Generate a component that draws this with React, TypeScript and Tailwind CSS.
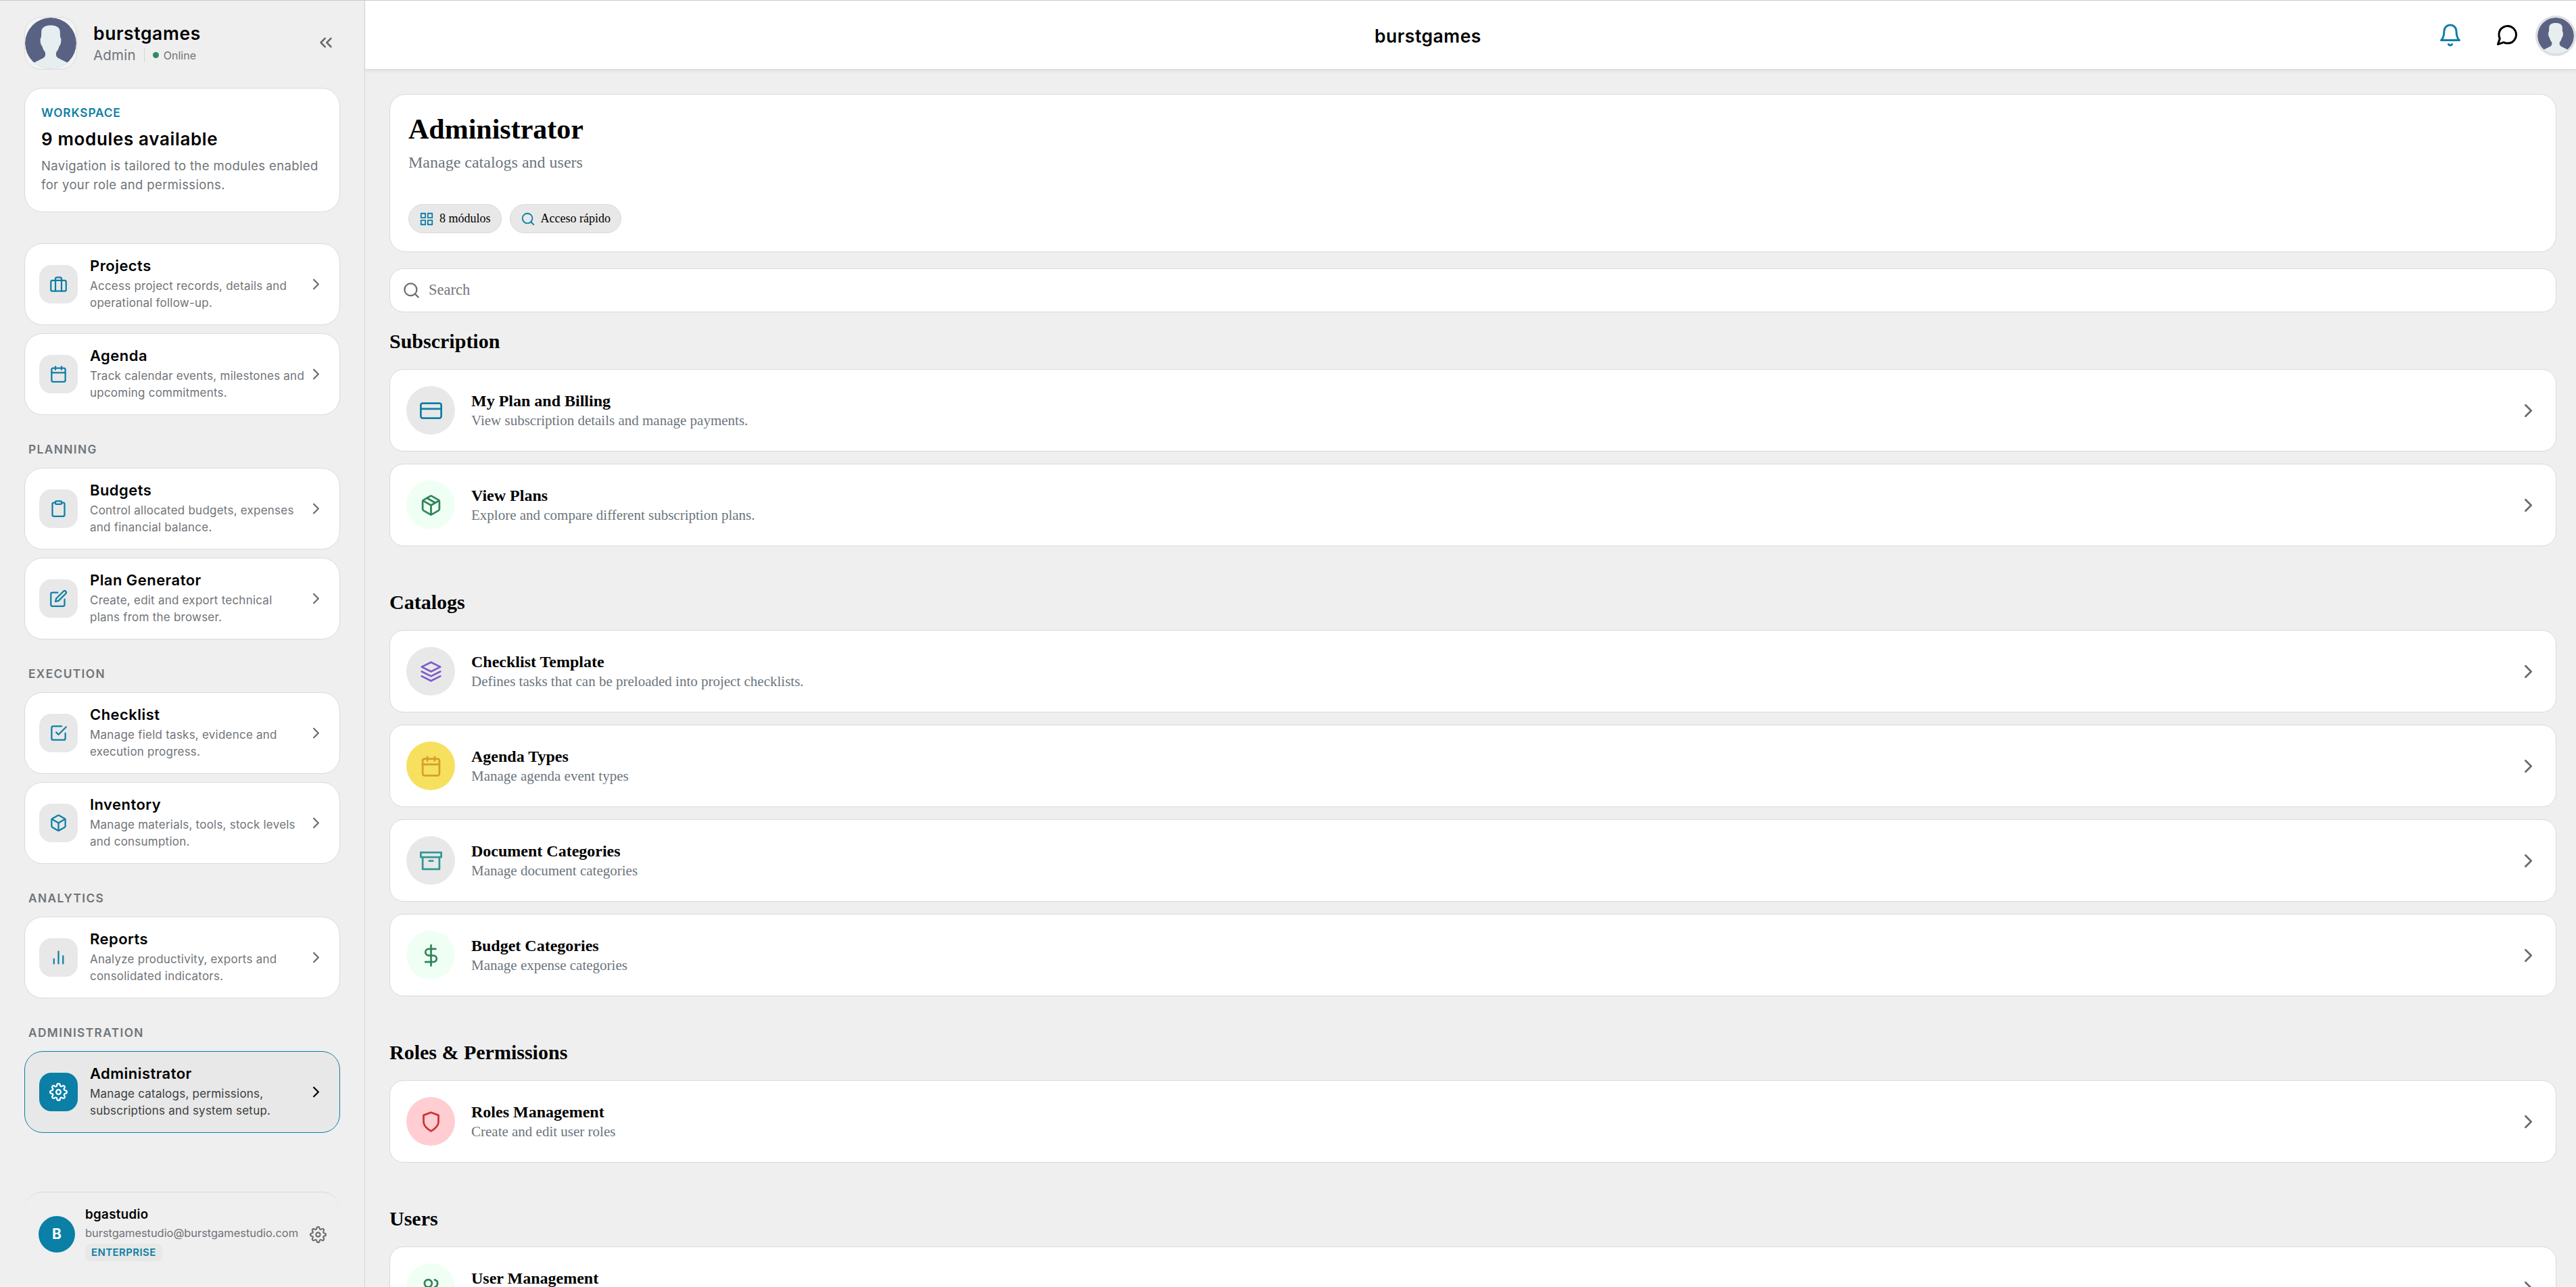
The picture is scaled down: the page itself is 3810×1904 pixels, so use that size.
import type { IconType } from "react-icons";
import {
  FiArchive,
  FiBarChart2,
  FiBell,
  FiBox,
  FiBriefcase,
  FiCalendar,
  FiCheckSquare,
  FiChevronRight,
  FiChevronsLeft,
  FiClipboard,
  FiCreditCard,
  FiDollarSign,
  FiEdit,
  FiGrid,
  FiLayers,
  FiMessageCircle,
  FiSearch,
  FiSettings,
  FiShield,
  FiUsers,
} from "react-icons/fi";

interface NavItem {
  title: string;
  lines: [string, string];
  icon: IconType;
  active?: boolean;
}

interface NavGroup {
  label?: string;
  items: NavItem[];
}

const navGroups: NavGroup[] = [
  {
    items: [
      {
        title: "Projects",
        lines: ["Access project records, details and", "operational follow-up."],
        icon: FiBriefcase,
      },
      {
        title: "Agenda",
        lines: ["Track calendar events, milestones and", "upcoming commitments."],
        icon: FiCalendar,
      },
    ],
  },
  {
    label: "PLANNING",
    items: [
      {
        title: "Budgets",
        lines: ["Control allocated budgets, expenses", "and financial balance."],
        icon: FiClipboard,
      },
      {
        title: "Plan Generator",
        lines: ["Create, edit and export technical", "plans from the browser."],
        icon: FiEdit,
      },
    ],
  },
  {
    label: "EXECUTION",
    items: [
      {
        title: "Checklist",
        lines: ["Manage field tasks, evidence and", "execution progress."],
        icon: FiCheckSquare,
      },
      {
        title: "Inventory",
        lines: ["Manage materials, tools, stock levels", "and consumption."],
        icon: FiBox,
      },
    ],
  },
  {
    label: "ANALYTICS",
    items: [
      {
        title: "Reports",
        lines: ["Analyze productivity, exports and", "consolidated indicators."],
        icon: FiBarChart2,
      },
    ],
  },
  {
    label: "ADMINISTRATION",
    items: [
      {
        title: "Administrator",
        lines: ["Manage catalogs, permissions,", "subscriptions and system setup."],
        icon: FiSettings,
        active: true,
      },
    ],
  },
];

/* Package box with a full tape strip across the lid */
function PackageIcon({ size = 24 }: { size?: number }) {
  return (
    <svg
      width={size}
      height={size}
      viewBox="0 0 24 24"
      fill="none"
      stroke="currentColor"
      strokeWidth="2"
      strokeLinecap="round"
      strokeLinejoin="round"
    >
      <path d="M21 16V8a2 2 0 0 0-1-1.73l-7-4a2 2 0 0 0-2 0l-7 4A2 2 0 0 0 3 8v8a2 2 0 0 0 1 1.73l7 4a2 2 0 0 0 2 0l7-4A2 2 0 0 0 21 16z" />
      <path d="M3.27 6.96 12 12.01l8.73-5.05M12 22.08V12" />
      <path d="M16.4 9.3 7.6 4.2" />
    </svg>
  );
}

const sections = [
  {
    title: "Subscription",
    items: [
      {
        title: "My Plan and Billing",
        desc: "View subscription details and manage payments.",
        icon: FiCreditCard,
        tone: "bg-[#e8e8e8] text-[#0e7fa5]",
      },
      {
        title: "View Plans",
        desc: "Explore and compare different subscription plans.",
        icon: PackageIcon,
        tone: "bg-[#effff4] text-[#2f855a]",
      },
    ],
  },
  {
    title: "Catalogs",
    items: [
      {
        title: "Checklist Template",
        desc: "Defines tasks that can be preloaded into project checklists.",
        icon: FiLayers,
        tone: "bg-[#e8e8e8] text-[#7c5cc9]",
      },
      {
        title: "Agenda Types",
        desc: "Manage agenda event types",
        icon: FiCalendar,
        tone: "bg-[#f6e05e] text-[#d3a02c]",
      },
      {
        title: "Document Categories",
        desc: "Manage document categories",
        icon: FiArchive,
        tone: "bg-[#e8e8e8] text-[#319795]",
      },
      {
        title: "Budget Categories",
        desc: "Manage expense categories",
        icon: FiDollarSign,
        tone: "bg-[#effff4] text-[#2f855a]",
      },
    ],
  },
  {
    title: "Roles & Permissions",
    items: [
      {
        title: "Roles Management",
        desc: "Create and edit user roles",
        icon: FiShield,
        tone: "bg-[#ffcdd2] text-[#cf3232]",
      },
    ],
  },
  {
    title: "Users",
    items: [
      {
        title: "User Management",
        desc: "",
        icon: FiUsers,
        tone: "bg-[#effff4] text-[#2f855a]",
      },
    ],
  },
];

function Avatar({ className }: { className: string }) {
  return (
    <svg viewBox="0 0 100 100" className={`rounded-full ${className}`}>
      <circle cx="50" cy="50" r="50" fill="#5a6284" />
      <path
        fill="#e7eef0"
        d="M50 15C59 15 67 18 68 26L68.5 38Q71 40 70 47Q69.500 53 67 55Q65 63 60.500 68V73Q61 77 66 79.500L84 88.500V100H16V88.500L34 79.500Q39 77 39.500 73V68Q35 63 33 55Q30.500 53 30 47Q29 40 31.500 38L32 26C33 18 41 15 50 15Z"
      />
    </svg>
  );
}

function NavCard({ item }: { item: NavItem }) {
  const Icon = item.icon;
  return (
    <a
      className={`flex h-[121px] items-center rounded-[27px] border pl-[21px] pr-[21px] ${
        item.active ? "border-[#0e7fa5] bg-[#e8e8e8]" : "border-[#dadada] bg-white"
      }`}
    >
      <div
        className={`flex h-[57px] w-[57px] shrink-0 items-center justify-center rounded-[18px] ${
          item.active ? "bg-[#0b7fa6] text-white" : "bg-[#e8e8e8] text-[#0e7fa5]"
        }`}
      >
        <Icon size={27} />
      </div>
      <div className="-mt-px ml-[18px] w-0 flex-1 whitespace-nowrap">
        <p className="text-[22px] font-semibold leading-[27px] tracking-[0.45px] text-black">
          {item.title}
        </p>
        <p
          className={`mt-[4px] text-[17px] leading-[25px] tracking-[0.23px] ${
            item.active ? "text-[#3a3d40]" : "text-[#6f7479]"
          }`}
        >
          {item.lines[0]}
          <br />
          {item.lines[1]}
        </p>
      </div>
      <FiChevronRight
        size={27}
        className={`shrink-0 ${item.active ? "text-black" : "text-[#686c70]"}`}
      />
    </a>
  );
}

function Sidebar() {
  return (
    <aside className="h-[1904px] w-[540px] shrink-0 overflow-hidden border-r border-[#d4d4d4] bg-[#efefef] px-9 pt-[24px] font-['Inter',sans-serif]">
      {/* Account */}
      <div className="flex h-[78px] items-center">
        <div className="h-[78px] w-[78px] shrink-0 overflow-hidden rounded-[24px] border border-[#dcdcdc] bg-[#f2f3f3]">
          <Avatar className="h-[76px] w-[76px]" />
        </div>
        <div className="ml-[24px] flex-1">
          <p className="text-[26.5px] font-semibold leading-[32px] tracking-[0.6px] text-black">
            burstgames
          </p>
          <div className="mt-[3px] flex h-[28px] items-center text-[#6f7479]">
            <span className="text-[20.5px] leading-[28px] tracking-[0.2px]">Admin</span>
            <span className="ml-[12px] h-[21px] w-px bg-[#d4d4d4]" />
            <span className="ml-[12px] h-[9px] w-[9px] rounded-full bg-[#2f8a62]" />
            <span className="ml-[7px] text-[16px] leading-[28px]">Online</span>
          </div>
        </div>
        <FiChevronsLeft size={30} className="mr-[6px] -mt-[3px] text-[#686c70]" />
      </div>

      {/* Workspace summary */}
      <div className="mt-[27px] h-[184px] whitespace-nowrap rounded-[27px] border border-[#dadada] bg-white pl-[24px] pt-[25px]">
        <p className="text-[17.3px] font-semibold leading-[22px] tracking-[0.85px] text-[#0e7fa5]">
          WORKSPACE
        </p>
        <p className="mt-[11px] text-[26px] font-semibold leading-[34px] tracking-[0.65px] text-black">
          9 modules available
        </p>
        <p className="mt-[8px] text-[18.5px] leading-[28px] tracking-[0.36px] text-[#6f7479]">
          Navigation is tailored to the modules enabled
          <br />
          for your role and permissions.
        </p>
      </div>

      {/* Navigation */}
      <nav className="mt-[46px]">
        {navGroups.map((group, i) => (
          <div key={i}>
            {group.label && (
              <p className="mb-[16px] mt-[40px] pl-[6px] text-[17.3px] font-semibold leading-[22px] tracking-[1.4px] text-[#6f7479]">
                {group.label}
              </p>
            )}
            <div className="flex flex-col gap-3">
              {group.items.map((item) => (
                <NavCard key={item.title} item={item} />
              ))}
            </div>
          </div>
        ))}
      </nav>

      {/* Signed-in user */}
      <div className="mt-[87px] flex h-[104px] items-center rounded-t-[27px] border-t border-[#dadada] pl-[21px] pr-[20px] pt-[21px]">
        <div className="flex h-[54px] w-[54px] shrink-0 items-center justify-center rounded-full bg-[#0b7fa6] text-[21px] font-bold text-white">
          B
        </div>
        <div className="-mt-px ml-[15px] w-0 flex-1 whitespace-nowrap">
          <p className="text-[18.7px] font-semibold leading-[24px] tracking-[0.35px] text-black">
            bgastudio
          </p>
          <p className="mt-[3px] text-[16.5px] leading-[24px] tracking-[-0.06px] text-[#6f7479]">
            burstgamestudio@burstgamestudio.com
          </p>
          <span className="mt-[4px] flex h-[26px] w-fit items-center rounded-[8px] bg-[#e8e8e8] px-[9px] text-[15px] font-semibold tracking-[0.4px] text-[#0e7fa5]">
            ENTERPRISE
          </span>
        </div>
        <FiSettings size={25} className="shrink-0 text-[#686c70]" />
      </div>
    </aside>
  );
}

function TopBar() {
  return (
    <header className="relative flex h-[102px] items-center border-b border-[#dcdcdc] bg-white shadow-[0_3px_4px_0_rgba(0,0,0,0.06)]">
      <h1 className="flex-1 pl-[78px] pt-[2px] text-center font-['Inter',sans-serif] text-[26.5px] font-semibold leading-[32px] tracking-[0.5px] text-black">
        burstgames
      </h1>
      <FiBell size={36} className="text-[#0e7fa5]" />
      <FiMessageCircle size={36} className="ml-12 text-black" />
      <div className="ml-6 mt-[2px] h-[60px] w-[60px] rounded-full border-[3px] border-[#dddfe0]">
        <Avatar className="h-[54px] w-[54px]" />
      </div>
    </header>
  );
}

export default function App() {
  return (
    <div className="h-[1904px] w-[3810px] overflow-hidden border-t border-[#c9c9c9] bg-[#efefef]">
      <div className="flex">
        <Sidebar />

        <div className="min-w-0 flex-1">
          <TopBar />

          <main className="h-[1801px] overflow-hidden pl-9 pr-[29px] pt-[36px] font-['Liberation_Serif','Times_New_Roman',serif]">
            {/* Page heading */}
            <div className="h-[234px] rounded-[24px] border border-[#dadada] bg-white pl-[27px] pt-[26px]">
              <h2 className="text-[42px] font-bold leading-[50px] text-black">Administrator</h2>
              <p className="mt-[9px] text-[24px] leading-[30px] text-[#6c757d]">
                Manage catalogs and users
              </p>
              <div className="mt-[47px] flex gap-[12px]">
                <span className="flex h-[43px] items-center gap-[8px] rounded-full border border-[#dadada] bg-[#e8e8e8] px-[15px] text-[18px] text-black">
                  <FiGrid size={22} className="text-[#0e7fa5]" />8 módulos
                </span>
                <span className="flex h-[43px] items-center gap-[8px] rounded-full border border-[#dadada] bg-[#e8e8e8] px-[15px] text-[18px] text-black">
                  <FiSearch size={22} className="text-[#0e7fa5]" />
                  Acceso rápido
                </span>
              </div>
            </div>

            {/* Search */}
            <label className="mt-[24px] flex h-[65px] items-center gap-[12px] rounded-[21px] border border-[#dadada] bg-white pl-[18px]">
              <FiSearch size={27} className="text-[#6a6e73]" />
              <input
                placeholder="Search"
                className="flex-1 pb-px text-[22.5px] outline-none placeholder:text-[#757575]"
              />
            </label>

            {sections.map((section, i) => (
              <section key={section.title} className={i === 0 ? "mt-[25px]" : "mt-[65px]"}>
                <h3 className="mb-[23px] text-[30px] font-bold leading-[36px] text-black">
                  {section.title}
                </h3>
                <div className="flex flex-col gap-[18px]">
                  {section.items.map(({ title, desc, icon: Icon, tone }) => (
                    <a
                      key={title}
                      className="flex h-[122px] items-center rounded-[21px] border border-[#dadada] bg-white px-6"
                    >
                      <div
                        className={`flex h-[72px] w-[72px] shrink-0 items-center justify-center rounded-full ${tone}`}
                      >
                        <Icon size={33} />
                      </div>
                      <div className="ml-6 flex-1">
                        <p className="text-[24px] font-bold leading-[29px] text-black">{title}</p>
                        <p className="mt-px min-h-[27px] text-[21px] leading-[27px] text-[#6c757d]">
                          {desc}
                        </p>
                      </div>
                      <FiChevronRight size={33} className="text-[#686c70]" />
                    </a>
                  ))}
                </div>
              </section>
            ))}
          </main>
        </div>
      </div>
    </div>
  );
}
